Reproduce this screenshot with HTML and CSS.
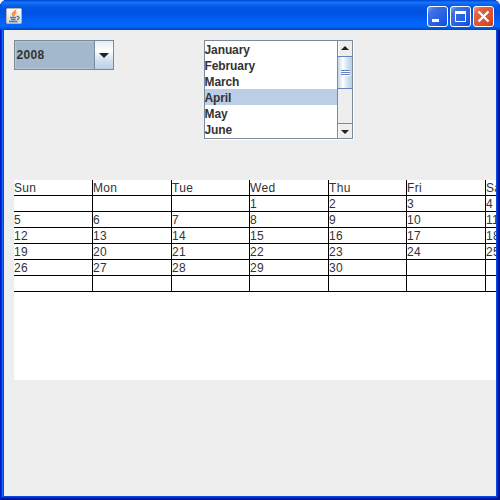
FILE: index.html
```html
<!DOCTYPE html>
<html lang="en">
<head>
<meta charset="utf-8">
<title>Calendar</title>
<link rel="stylesheet" href="styles.css">
</head>
<body>
<div class="window">
  <header class="titlebar">
    <svg class="app-icon" width="16" height="16" viewBox="0 0 16 16">
      <defs><linearGradient id="tile" x1="0" y1="0" x2="0" y2="1"><stop offset="0" stop-color="#fff"/><stop offset="1" stop-color="#d5d5d5"/></linearGradient></defs>
      <rect x=".5" y=".5" width="15" height="15" rx="1" fill="url(#tile)" stroke="#b5b0a8"/>
      <path d="M9.500 2C10 4 5.500 4.500 6.500 6.500L7.500 8.500M10.500 4.500C8 5.500 8 6 8.500 7.500" fill="none" stroke="#f08a35" stroke-width="1.600"/>
      <path d="M4 9.500H10M5 11.500H9.500M3 13.500H11.500M10.500 8.500C14 8 13.500 11 11 11.500" fill="none" stroke="#587b94" stroke-width="1.300"/>
    </svg>
    <div class="controls">
      <span class="control"><svg width="21" height="21"><rect x="5" y="13" width="7" height="3" fill="#fff"/></svg></span>
      <span class="control"><svg width="21" height="21"><path d="M5.500 6V15.500H15.500V6" fill="none" stroke="#fff"/><rect x="5" y="5" width="11" height="3" fill="#fff"/></svg></span>
      <span class="control close"><svg width="21" height="21"><path d="M5.500 5.500L15.500 15.500M15.500 5.500L5.500 15.500" stroke="#fff" stroke-width="2.300"/></svg></span>
    </div>
  </header>
  <main class="content">
    <div class="pickers">
      <div class="combo">
        <span class="combo-value">2008</span>
        <span class="combo-arrow"><svg width="18" height="28"><path d="M4 12H14L9 17Z" fill="#222"/></svg></span>
      </div>
      <div class="list">
        <ul class="months">
          <li>January</li><li>February</li><li>March</li><li class="selected">April</li><li>May</li><li>June</li>
        </ul>
        <div class="scrollbar">
          <span class="step up"><svg width="14" height="15"><path d="M3 9L7 5L11 9Z" fill="#222"/></svg></span>
          <span class="thumb"><svg width="14" height="31"><path d="M3 13.500H12M3 15.500H12M3 17.500H12" stroke="#6382bf"/><path d="M3 14.500H12M3 16.500H12M4 18.500H13" stroke="#fff"/></svg></span>
          <span class="track"></span>
          <span class="step down"><svg width="14" height="14"><path d="M3 6H11L7 10Z" fill="#222"/></svg></span>
        </div>
      </div>
    </div>
    <div class="calendar">
      <div class="grid">
        <span>Sun</span><span>Mon</span><span>Tue</span><span>Wed</span><span>Thu</span><span>Fri</span><span>Sat</span>
        <span></span><span></span><span></span><span>1</span><span>2</span><span>3</span><span>4</span>
        <span>5</span><span>6</span><span>7</span><span>8</span><span>9</span><span>10</span><span>11</span>
        <span>12</span><span>13</span><span>14</span><span>15</span><span>16</span><span>17</span><span>18</span>
        <span>19</span><span>20</span><span>21</span><span>22</span><span>23</span><span>24</span><span>25</span>
        <span>26</span><span>27</span><span>28</span><span>29</span><span>30</span><span></span><span></span>
        <span></span><span></span><span></span><span></span><span></span><span></span><span></span>
      </div>
    </div>
  </main>
</div>
</body>
</html>
```

FILE: styles.css
```css
* { box-sizing: border-box; }
body { margin: 0; background: #fff; font: 12px/16px "Liberation Sans", Arial, sans-serif; color: #333; overflow: hidden; }
svg { display: block; }
.window {
  width: 500px; height: 500px; padding: 0 4px 4px; overflow: hidden;
  border-radius: 7px 7px 0 0; background: #0048f0;
  box-shadow: inset 1px 0 #0019cf, inset -2px 0 #00138c, inset 0 -2px #00138c, inset 2px 0 #0831d9, inset -3px 0 #0030d8, inset 0 -3px #0030d8, inset 3px 0 #166aee;
}
.titlebar {
  height: 30px; margin: 0 -4px; padding: 6px 6px 0 6px;
  display: flex; justify-content: space-between;
  background: linear-gradient(#0048d8 0, #0050e0 1px, #1a78f5 2px, #1270f5 3px, #0562ee 5px, #0055e2 8px, #0053e1 12px, #0056ea 16px, #005ff6 20px, #0268fe 25px, #0062f2 27px, #0056e0 28px, #0046c0 30px);
}
.app-icon { margin-top: 2px; }
.controls { display: flex; gap: 2px; }
.control {
  width: 21px; height: 21px; border: 1px solid #fff; border-radius: 3px;
  background: linear-gradient(135deg, #7ba0f4 0, #3f70e6 22%, #2a60df 60%, #1658ea 82%, #0a48c8 100%);
}
.control + .control { margin-left: 0; }
.controls { gap: 2px; }
.control svg { margin: -1px; }
.close { background: linear-gradient(135deg, #f0a08a 0, #e26444 22%, #dd5230 60%, #dc4a1c 82%, #b83a10 100%); }
.content { height: 466px; padding: 10px 0 0 10px; background: #eee; overflow: hidden; }
.pickers { height: 140px; display: flex; align-items: flex-start; gap: 90px; font-weight: bold; }
.combo { width: 100px; height: 30px; display: flex; border: 1px solid #7a8a99; }
.combo-value { width: 80px; padding: 5px 0 0 1px; background: #a3b8cc; border: 1px solid #b3c5d8; border-right-color: #a3b8cc; letter-spacing: .33px; text-indent: -.5px; }
.combo-arrow { width: 19px; border-left: 1px solid #7a8a99; background: linear-gradient(#e3edf7, #fff 35%, #d5e3f1 65%, #b8cfe5); }
.list { width: 149px; height: 99px; display: flex; border: 1px solid #7a8a99; background: #fff; box-shadow: 1px 1px #fff; }
.months { width: 132px; height: 97px; margin: 0; padding: 0; list-style: none; background: #fff; overflow: hidden; letter-spacing: -.1px; text-indent: -.5px; }
.months li { height: 16px; line-height: 18px; }
.months .selected { background: #bccde6; }
.scrollbar { width: 15px; display: flex; flex-direction: column; border-left: 1px solid #7a8a99; background: #eee; }
.step { background: linear-gradient(90deg, #fff, #eee 2px); }
.up { height: 15px; }
.thumb { height: 33px; border: 1px solid #6382bf; border-width: 1px 0; background: linear-gradient(90deg, #c4d5e9, #fff 35%, #dce8f4 60%, #b8cfe5); }
.track { flex: 1; }
.down { height: 15px; border-top: 1px solid #7a8a99; }
.calendar { height: 200px; background: #fff; overflow: hidden; }
.grid { width: 551px; display: grid; grid-template-columns: 79px 79px 78px 79px 78px 79px 79px; grid-auto-rows: 16px; letter-spacing: .33px; }
.grid span { border-right: 1px solid #000; border-bottom: 1px solid #000; white-space: nowrap; line-height: 16px; }
```
